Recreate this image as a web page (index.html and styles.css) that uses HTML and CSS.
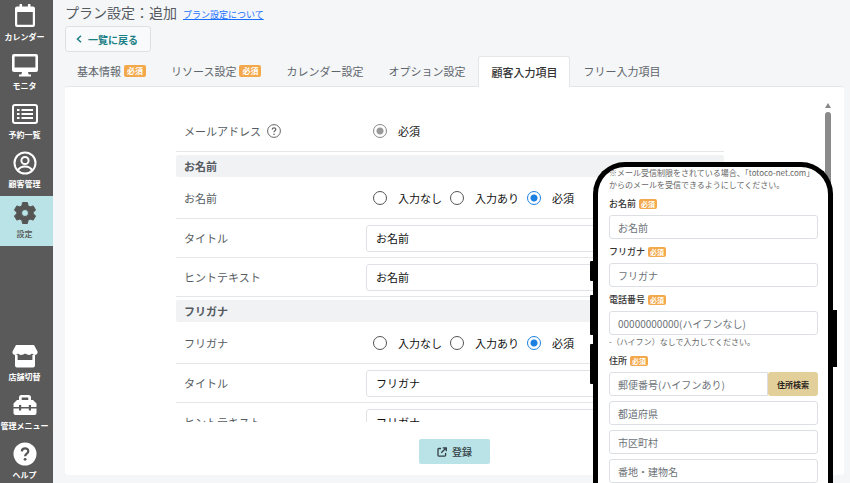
FILE: index.html
```html
<!DOCTYPE html>
<html lang="ja">
<head>
    <meta charset="UTF-8">
    <meta name="viewport" content="width=device-width, initial-scale=1.0">
    <title>プラン設定：追加</title>
    <link rel="stylesheet" href="styles.css">
</head>
<body>
    <nav class="sidebar">
        <a href="#" class="side-item">
            <svg width="24" height="24" viewBox="0 0 24 24" fill="#fff">
                <path d="M4 2.500h2.500V1a1.300 1.300 0 0 1 2.600 0v1.500h5.800V1a1.300 1.300 0 0 1 2.600 0v1.500H20a2 2 0 0 1 2 2V21a2 2 0 0 1-2 2H4a2 2 0 0 1-2-2V4.500a2 2 0 0 1 2-2zM4.200 8v12.800h15.600V8z"/>
            </svg>
            <span>カレンダー</span>
        </a>
        <a href="#" class="side-item">
            <svg width="26" height="24" viewBox="0 0 26 24" fill="#fff">
                <path d="M2 1h22a2 2 0 0 1 2 2v14a2 2 0 0 1-2 2h-8l.6 2.500h2.400V23.500H7v-2h2.400L10 19H2a2 2 0 0 1-2-2V3a2 2 0 0 1 2-2zm.6 2.600v10.800h20.800V3.600z"/>
            </svg>
            <span>モニタ</span>
        </a>
        <a href="#" class="side-item">
            <svg width="26" height="24" viewBox="0 0 26 24" fill="none" stroke="#fff" stroke-width="2">
                <rect x="1" y="3" width="24" height="18" rx="2"/>
                <path d="M5 8h2.500M5 12h2.500M5 16h2.500M9.500 8H21M9.500 12H21M9.500 16H21"/>
            </svg>
            <span>予約一覧</span>
        </a>
        <a href="#" class="side-item">
            <svg width="24" height="24" viewBox="0 0 24 24" fill="none" stroke="#fff" stroke-width="2">
                <circle cx="12" cy="12" r="10.500"/>
                <circle cx="12" cy="9.500" r="3.600"/>
                <path d="M4.800 19.500c1.500-3 4.200-4 7.200-4s5.700 1 7.200 4"/>
            </svg>
            <span>顧客管理</span>
        </a>
        <a href="#" class="side-item active">
            <svg width="24" height="24" viewBox="0 0 24 24" fill="#555" stroke="#555" stroke-width="1" stroke-linejoin="round">
                <path fill-rule="evenodd" d="M9.600 1.500h4.800l.7 3.200 2 1.200 3.100-1 2.400 4.200-2.400 2.100v1.600l2.400 2.100-2.400 4.200-3.100-1-2 1.200-.7 3.200H9.600l-.7-3.200-2-1.200-3.100 1-2.400-4.200 2.400-2.100v-1.600L1.400 9.100l2.400-4.200 3.100 1 2-1.200zM12 8.500a3.500 3.500 0 1 0 0 7 3.500 3.500 0 0 0 0-7z"/>
            </svg>
            <span>設定</span>
        </a>
        <div class="side-bottom">
            <a href="#" class="side-item">
                <svg width="26" height="24" viewBox="0 0 26 24" fill="#fff">
                    <path d="M4 1h18l3.500 6.500c.5 2-1 3.500-2.700 3.500-1.300 0-2.200-.6-2.800-1.400-.7.800-1.700 1.400-2.900 1.400-1.600 0-3-1-4.100-1.400C12 10.400 10.700 11 9 11c-1.200 0-2.300-.6-3-1.400C5.400 10.400 4.500 11 3.200 11 1.500 11 0 9.500.5 7.500z"/>
                    <path d="M3 11h2.600v5h14.800v-5H23v10.500a2 2 0 0 1-2 2H5a2 2 0 0 1-2-2z"/>
                </svg>
                <span>店舗切替</span>
            </a>
            <a href="#" class="side-item">
                <svg width="24" height="24" viewBox="0 0 24 24" fill="#fff">
                    <path fill-rule="evenodd" d="M8.500 2h7A2.500 2.500 0 0 1 18 4.500V7h2l3.500 3.500V14H18v-2h-2.200v2H8.200v-2H6v2H.5v-3.500L4 7h2V4.500A2.500 2.500 0 0 1 8.500 2zm.2 2.400V7h6.600V4.400z"/>
                    <path d="M.5 15.500H6v2h2.200v-2h7.600v2H18v-2h5.500V20a2 2 0 0 1-2 2h-19a2 2 0 0 1-2-2z"/>
                </svg>
                <span>管理メニュー</span>
            </a>
            <a href="#" class="side-item">
                <svg width="24" height="24" viewBox="0 0 24 24" fill="none">
                    <circle cx="12" cy="12" r="11.500" fill="#fff"/>
                    <path d="M8.800 9.400c.2-4 6.600-4 6.500-.2 0 2.400-3.200 2.500-3.200 5" stroke="#555" stroke-width="2.200"/>
                    <circle cx="12.100" cy="17.300" r="1.400" fill="#555"/>
                </svg>
                <span>ヘルプ</span>
            </a>
        </div>
    </nav>

    <main class="main">
        <header class="page-header">
            <h1>プラン設定：追加</h1>
            <a href="#">プラン設定について</a>
        </header>
        <button type="button" class="back-btn">
            <svg width="6" height="8" viewBox="0 0 6 8" fill="none" stroke="#1b7f86" stroke-width="1.500">
                <path d="M5 .8L1.500 4 5 7.200"/>
            </svg>
            一覧に戻る
        </button>

        <nav class="tabs">
            <a href="#" class="tab">基本情報<span class="badge">必須</span></a>
            <a href="#" class="tab">リソース設定<span class="badge">必須</span></a>
            <a href="#" class="tab">カレンダー設定</a>
            <a href="#" class="tab">オプション設定</a>
            <a href="#" class="tab active">顧客入力項目</a>
            <a href="#" class="tab">フリー入力項目</a>
        </nav>

        <form class="panel">
            <div class="panel-body">
                <div class="form-scroll">
                    <div class="fields">
                        <div class="row radio-row">
                            <div class="row-label">メールアドレス
                                <svg width="14" height="14" viewBox="0 0 14 14" fill="none" stroke="#666">
                                    <circle cx="7" cy="7" r="6.400"/>
                                    <path d="M5.200 5.600c.1-2.300 3.700-2.300 3.600-.1 0 1.300-1.800 1.300-1.800 2.700" stroke-width="1.200"/>
                                    <circle cx="7" cy="10.300" r=".8" fill="#666" stroke="none"/>
                                </svg>
                            </div>
                            <div class="radios">
                                <label><input type="radio" name="mail" checked disabled>必須</label>
                            </div>
                        </div>

                        <h2>お名前</h2>
                        <div class="row radio-row">
                            <div class="row-label">お名前</div>
                            <div class="radios">
                                <label><input type="radio" name="name">入力なし</label>
                                <label><input type="radio" name="name">入力あり</label>
                                <label><input type="radio" name="name" checked>必須</label>
                            </div>
                        </div>
                        <div class="row">
                            <label class="row-label" for="nameTitle">タイトル</label>
                            <input type="text" id="nameTitle" class="text-input" value="お名前">
                        </div>
                        <div class="row">
                            <label class="row-label" for="nameHint">ヒントテキスト</label>
                            <input type="text" id="nameHint" class="text-input" value="お名前">
                        </div>

                        <h2>フリガナ</h2>
                        <div class="row radio-row">
                            <div class="row-label">フリガナ</div>
                            <div class="radios">
                                <label><input type="radio" name="kana">入力なし</label>
                                <label><input type="radio" name="kana">入力あり</label>
                                <label><input type="radio" name="kana" checked>必須</label>
                            </div>
                        </div>
                        <div class="row">
                            <label class="row-label" for="kanaTitle">タイトル</label>
                            <input type="text" id="kanaTitle" class="text-input" value="フリガナ">
                        </div>
                        <div class="row">
                            <label class="row-label" for="kanaHint">ヒントテキスト</label>
                            <input type="text" id="kanaHint" class="text-input" value="フリガナ">
                        </div>
                    </div>
                </div>
                <div class="scrollbar">
                    <div class="scroll-arrow"></div>
                    <div class="scroll-thumb"></div>
                </div>
            </div>
            <div class="panel-footer">
                <button type="submit" class="submit-btn">
                    <svg width="10" height="10" viewBox="0 0 10 10" fill="none" stroke="#333f44" stroke-width="1.300">
                        <path d="M4 1.500H1.800a.8.800 0 0 0-.8.800v6a.8.800 0 0 0 .8.800h6a.8.800 0 0 0 .8-.8V6M5.800.8h3.500v3.500M9 1L4.300 5.700"/>
                    </svg>
                    登録
                </button>
            </div>
        </form>
    </main>

    <!-- Booking form preview -->
    <aside class="phone">
        <span class="phone-key key-mute"></span>
        <span class="phone-key key-up"></span>
        <span class="phone-key key-down"></span>
        <span class="phone-key key-power"></span>
        <form class="phone-screen">
            <p class="note">※メール受信制限をされている場合、「totoco-net.com」からのメールを受信できるようにしてください。</p>
            <div class="phone-group">
                <label for="pName">お名前<span class="badge">必須</span></label>
                <input type="text" id="pName" placeholder="お名前">
            </div>
            <div class="phone-group">
                <label for="pKana">フリガナ<span class="badge">必須</span></label>
                <input type="text" id="pKana" placeholder="フリガナ">
            </div>
            <div class="phone-group">
                <label for="pTel">電話番号<span class="badge">必須</span></label>
                <input type="tel" id="pTel" placeholder="00000000000(ハイフンなし)">
                <p class="hint">-（ハイフン）なしで入力してください。</p>
            </div>
            <div class="phone-group">
                <label for="pZip">住所<span class="badge">必須</span></label>
                <div class="zip">
                    <input type="text" id="pZip" placeholder="郵便番号(ハイフンあり)">
                    <button type="button">住所検索</button>
                </div>
                <input type="text" aria-label="都道府県" placeholder="都道府県">
                <input type="text" aria-label="市区町村" placeholder="市区町村">
                <input type="text" aria-label="番地・建物名" placeholder="番地・建物名">
            </div>
        </form>
    </aside>
</body>
</html>
```
FILE: styles.css
```css
* {
    margin: 0;
    padding: 0;
    box-sizing: border-box;
    font-family: 'Noto Sans CJK JP', sans-serif;
}

body {
    display: flex;
    height: 100vh;
    overflow: hidden;
    position: relative;
    background: #f4f6f8;
    color: #555b61;
    font-size: 11px;
}

a {
    text-decoration: none;
}

/* Sidebar */
.sidebar {
    width: 53px;
    flex-shrink: 0;
    display: flex;
    flex-direction: column;
    background: #5a5a5a;
}

.side-item {
    display: flex;
    flex-direction: column;
    align-items: center;
    height: 49px;
    flex-shrink: 0;
    padding: 4px 4px 0 0;
    gap: 3px;
    color: white;
    font-size: 8px;
    font-weight: 700;
    line-height: 12px;
    white-space: nowrap;
}

.side-item.active {
    height: 50px;
    padding-top: 5px;
    background: #b9e3e6;
    color: #555;
    font-weight: 500;
}

.side-bottom {
    margin-top: auto;
    margin-bottom: -4px;
}

/* Main area */
.main {
    flex: 1;
    min-width: 0;
    display: flex;
    flex-direction: column;
    padding: 2px 6px 8px 12px;
}

.page-header {
    display: flex;
    align-items: baseline;
    gap: 6px;
    line-height: 20px;
}

.page-header h1 {
    font-size: 14px;
    font-weight: 400;
}

.page-header a {
    color: #1a6fff;
    font-size: 9px;
    text-decoration: underline;
}

.back-btn {
    align-self: flex-start;
    display: flex;
    align-items: center;
    gap: 6px;
    height: 26px;
    margin-top: 1px;
    padding: 0 12px 0 10px;
    background: #f8fafb;
    border: 1px solid #dde1e4;
    border-radius: 3px;
    color: #1b7f86;
    font-size: 10px;
    font-weight: 700;
    cursor: pointer;
}

.badge {
    background: #f3a94b;
    color: white;
    border-radius: 2px;
    padding: 0 3px;
    font-size: 8px;
    font-weight: 700;
    line-height: 12px;
}

.tabs {
    display: flex;
    gap: 1px;
    height: 30px;
    margin-top: 4px;
}

.tab {
    display: flex;
    align-items: center;
    gap: 3px;
    padding: 0 12px;
    color: #5f656b;
    white-space: nowrap;
}

.tab.active {
    background: white;
    border: 1px solid #e3e7ea;
    border-bottom: none;
    border-radius: 3px 3px 0 0;
    margin-bottom: -1px;
    color: #333;
    font-weight: 500;
    z-index: 1;
}

.panel {
    flex: 1;
    min-height: 0;
    display: flex;
    flex-direction: column;
    background: white;
    border-top: 1px solid #e3e7ea;
    border-radius: 3px;
}

.panel-body {
    flex: 1;
    min-height: 0;
    display: flex;
    padding-right: 9px;
}

.form-scroll {
    flex: 1;
    padding: 23px 0 0 14px;
    overflow: hidden;
}

.fields {
    max-width: 548px;
    margin: 0 auto;
}

.fields h2 {
    margin-top: 3px;
    padding: 0 8px;
    background: #f0f2f4;
    border-radius: 2px;
    font-size: 11px;
    font-weight: 700;
    line-height: 22px;
}

.row {
    display: flex;
    align-items: center;
    height: 39px;
    padding: 0 8px;
    border-bottom: 1px solid #e4e7ea;
}

.radio-row {
    height: 42px;
}

.row-label {
    display: flex;
    align-items: center;
    gap: 6px;
    width: 182px;
    flex-shrink: 0;
}

.text-input {
    flex: 1;
    min-width: 0;
    height: 27px;
    padding: 0 9px;
    border: 1px solid #dfe2e6;
    border-radius: 3px;
    color: #111;
    font-size: 11px;
}

.radios {
    display: flex;
    gap: 8px;
    padding-left: 7px;
    color: #111;
}

.radios label {
    display: flex;
    align-items: center;
    gap: 11px;
}

.radios input {
    appearance: none;
    width: 14px;
    height: 14px;
    border: 1px solid #555;
    border-radius: 50%;
    background: white;
}

.radios input:checked {
    border-color: #1b80e0;
    background: radial-gradient(circle, #1b80e0 3px, white 4px);
}

.radios input:disabled {
    border-color: #888;
    background: radial-gradient(circle, #999 3px, white 4px);
}

.scrollbar {
    width: 14px;
    display: flex;
    flex-direction: column;
    align-items: center;
    gap: 4px;
    padding-top: 16px;
}

.scroll-arrow {
    border: 3px solid transparent;
    border-top: none;
    border-bottom: 5px solid #888;
}

.scroll-thumb {
    width: 6px;
    height: 180px;
    border-radius: 3px;
    background: #8a8a8a;
}

.panel-footer {
    display: flex;
    justify-content: center;
    padding: 17px 0 11px;
}

.submit-btn {
    display: flex;
    align-items: center;
    justify-content: center;
    gap: 5px;
    width: 71px;
    height: 25px;
    background: #b9e3e6;
    border: none;
    border-radius: 2px;
    color: #333f44;
    font-size: 10px;
    font-weight: 500;
    cursor: pointer;
}

/* Phone preview */
.phone {
    position: absolute;
    top: 162px;
    right: 17px;
    bottom: 0;
    width: 240px;
    background: white;
    border: 5px solid black;
    border-bottom: none;
    border-radius: 32px 32px 0 0;
}

.phone-key {
    position: absolute;
    left: -8px;
    width: 4px;
    background: black;
    border-radius: 1px 0 0 1px;
}

.key-mute {
    top: 94px;
    height: 20px;
}

.key-up {
    top: 128px;
    height: 40px;
}

.key-down {
    top: 177px;
    height: 40px;
}

.key-power {
    left: auto;
    right: -9px;
    top: 143px;
    width: 5px;
    height: 57px;
}

.phone-screen {
    height: 100%;
    padding: 0 10px 0 11px;
    border-radius: 26px 26px 0 0;
    overflow: hidden;
    color: #333;
}

.note,
.hint {
    color: #666;
    font-size: 8px;
    line-height: 12px;
}

.note {
    margin-bottom: 6px;
}

.phone-group {
    display: flex;
    flex-direction: column;
    gap: 5px;
    margin-bottom: 6px;
}

.phone-group label {
    display: flex;
    align-items: center;
    gap: 3px;
    font-size: 9px;
    font-weight: 500;
    line-height: 13px;
}

.phone-group .badge {
    padding: 0 2px;
    font-size: 7px;
    line-height: 10px;
}

.phone-group input {
    width: 100%;
    height: 24px;
    flex-shrink: 0;
    padding: 0 8px;
    border: 1px solid #dcdfe3;
    border-radius: 3px;
    font-size: 10px;
}

.phone-group input::placeholder {
    color: #6c7278;
}

.phone-group .hint {
    margin-top: -4px;
}

.zip {
    display: flex;
}

.zip input {
    flex: 1;
    min-width: 0;
    border-radius: 3px 0 0 3px;
}

.zip button {
    width: 50px;
    background: #e3cf9a;
    border: none;
    border-radius: 3px;
    color: #2b2520;
    font-size: 8px;
    font-weight: 700;
}
```
